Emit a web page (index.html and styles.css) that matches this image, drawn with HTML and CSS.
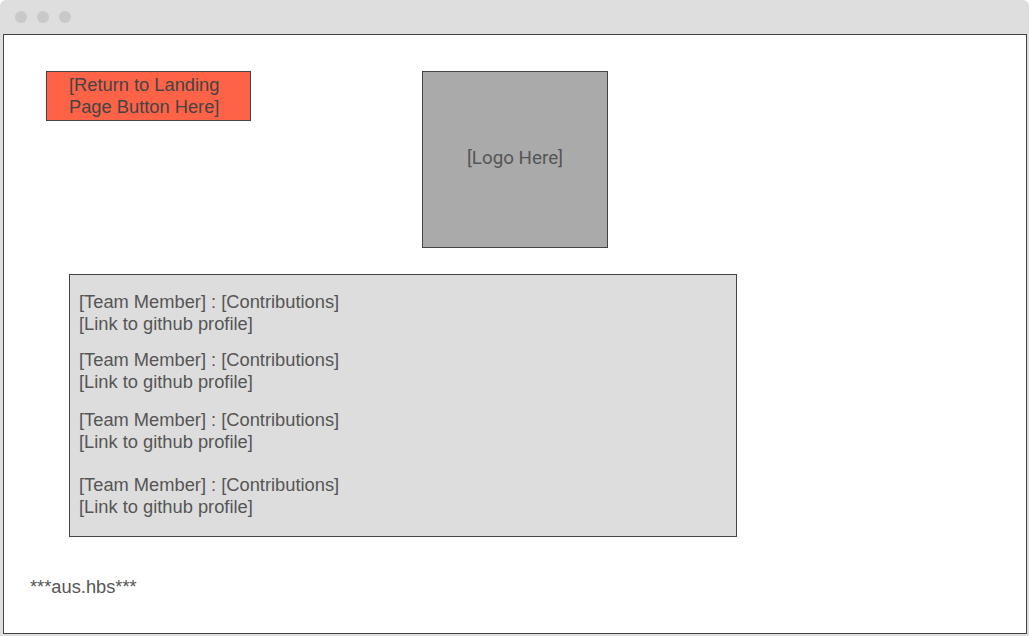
FILE: index.html
```html
<!DOCTYPE html>
<html>
<head>
<meta charset="utf-8">
<link rel="stylesheet" href="styles.css">
</head>
<body>
<div class="window">
  <div class="titlebar">
    <span class="dot"></span><span class="dot"></span><span class="dot"></span>
  </div>
  <div class="content">
    <div class="header">
      <div class="return-btn">[Return to Landing Page Button Here]</div>
      <div class="logo">[Logo Here]</div>
    </div>
    <div class="team">
      <div class="member m1">[Team Member] : [Contributions]<br>[Link to github profile]</div>
      <div class="member m2">[Team Member] : [Contributions]<br>[Link to github profile]</div>
      <div class="member m3">[Team Member] : [Contributions]<br>[Link to github profile]</div>
      <div class="member m4">[Team Member] : [Contributions]<br>[Link to github profile]</div>
    </div>
    <div class="footer">***aus.hbs***</div>
  </div>
</div>
</body>
</html>
```
FILE: styles.css
```css
html, body {
  margin: 0;
  padding: 0;
  background: #ffffff;
}
body {
  width: 1029px;
  height: 636px;
  overflow: hidden;
  font-family: "Liberation Sans", Arial, sans-serif;
  color: #555555;
}
.window {
  width: 1029px;
  height: 636px;
  box-sizing: border-box;
  background: #dedede;
  border-radius: 6px 6px 0 0;
  display: flex;
  flex-direction: column;
}
.titlebar {
  height: 34px;
  display: flex;
  align-items: center;
  padding-left: 15px;
  gap: 10px;
}
.dot {
  width: 12px;
  height: 12px;
  border-radius: 50%;
  background: #c9c9c9;
}
.content {
  margin: 0 2px 2px 3px;
  height: 600px;
  box-sizing: border-box;
  background: #ffffff;
  border: 1px solid #444444;
  padding-top: 36px;
}
.header {
  display: grid;
  grid-template-columns: 1fr auto 1fr;
  align-items: start;
}
.return-btn {
  grid-column: 1;
  justify-self: start;
  margin-left: 42px;
  width: 205px;
  height: 50px;
  box-sizing: border-box;
  background: #ff6347;
  border: 1px solid #444444;
  padding: 2px 6px 0 22px;
  font-size: 18.3px;
  line-height: 22px;
  color: #444444;
}
.logo {
  grid-column: 2;
  width: 186px;
  height: 177px;
  box-sizing: border-box;
  background: #aaaaaa;
  border: 1px solid #444444;
  display: flex;
  align-items: center;
  justify-content: center;
  font-family: Roboto, "Liberation Sans", sans-serif;
  font-size: 18.8px;
  color: #555555;
  padding-bottom: 4px;
}
.team {
  margin: 26px 0 0 65px;
  width: 668px;
  height: 263px;
  box-sizing: border-box;
  background: #dddddd;
  border: 1px solid #444444;
  padding: 16px 0 0 9px;
}
.member {
  font-size: 18.3px;
  line-height: 22px;
}
.m2 { margin-top: 14px; }
.m3 { margin-top: 16px; }
.m4 { margin-top: 21px; }
.footer {
  margin: 39px 0 0 26px;
  font-size: 18.3px;
  line-height: 22px;
}
```
